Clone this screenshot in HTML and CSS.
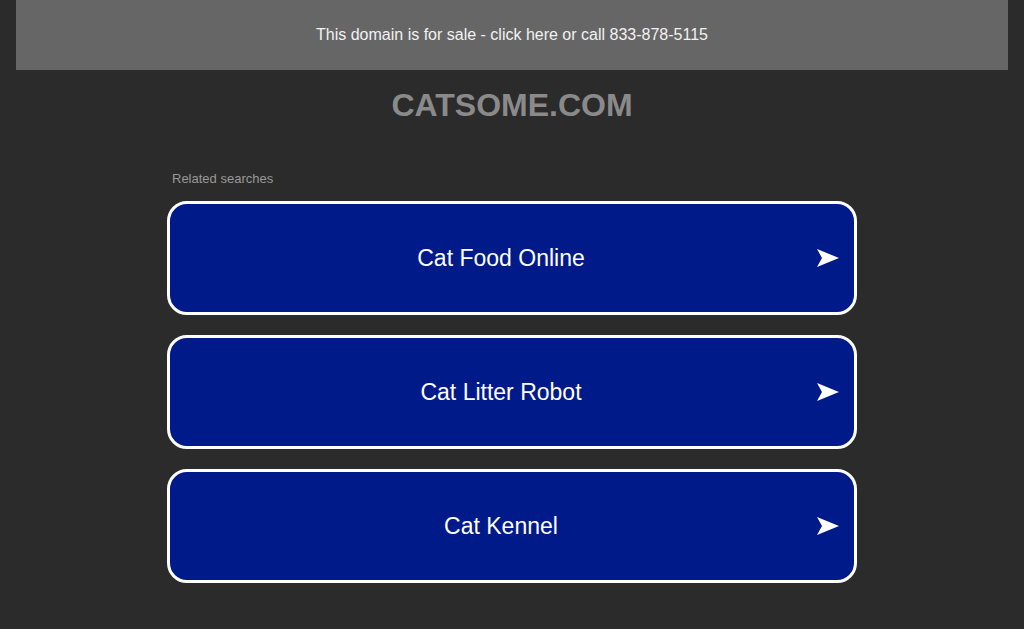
FILE: index.html
```html
<!DOCTYPE html>
<html>
<head>
  <meta charset="utf-8">
  <title>catsome.com</title>
  <link rel="stylesheet" href="styles.css">
</head>
<body>

<div class="salebar">This domain is for sale - click here or call 833-878-5115</div>

<h1 class="domain">CATSOME.COM</h1>

<div class="related">
  <div class="label">Related searches</div>
  <a class="link" href="#">Cat Food Online<svg class="arrow" viewBox="0 0 22 18"><polygon points="0,0 22,9 0,18 5,9"/></svg></a>
  <a class="link" href="#">Cat Litter Robot<svg class="arrow" viewBox="0 0 22 18"><polygon points="0,0 22,9 0,18 5,9"/></svg></a>
  <a class="link" href="#">Cat Kennel<svg class="arrow" viewBox="0 0 22 18"><polygon points="0,0 22,9 0,18 5,9"/></svg></a>
</div>

</body>
</html>
```

FILE: styles.css
```css
body { margin:0; padding:0 16px; background:#2b2b2b; font-family:"Liberation Sans", Arial, sans-serif; }
.salebar { height:70px; line-height:70px; background:#666; color:#f2f2f2; text-align:center; font-size:16px; }
.domain { margin:0; padding-top:17px; height:36px; line-height:36px; text-align:center; font-size:32px; font-weight:bold; color:#8a8a8a; }
.related { width:690px; margin:48px auto 0; }
.label { font-size:13px; color:#999; padding-left:5px; margin-bottom:15px; }
.link { position:relative; display:block; height:108px; line-height:109px; margin-bottom:20px; padding-right:22px;
  background:#011a8a; border:3px solid #fff; border-radius:20px; color:#fff; font-size:23px; text-align:center; text-decoration:none; }
.arrow { position:absolute; right:15px; top:45px; width:22px; height:18px; fill:#fff; }
```
